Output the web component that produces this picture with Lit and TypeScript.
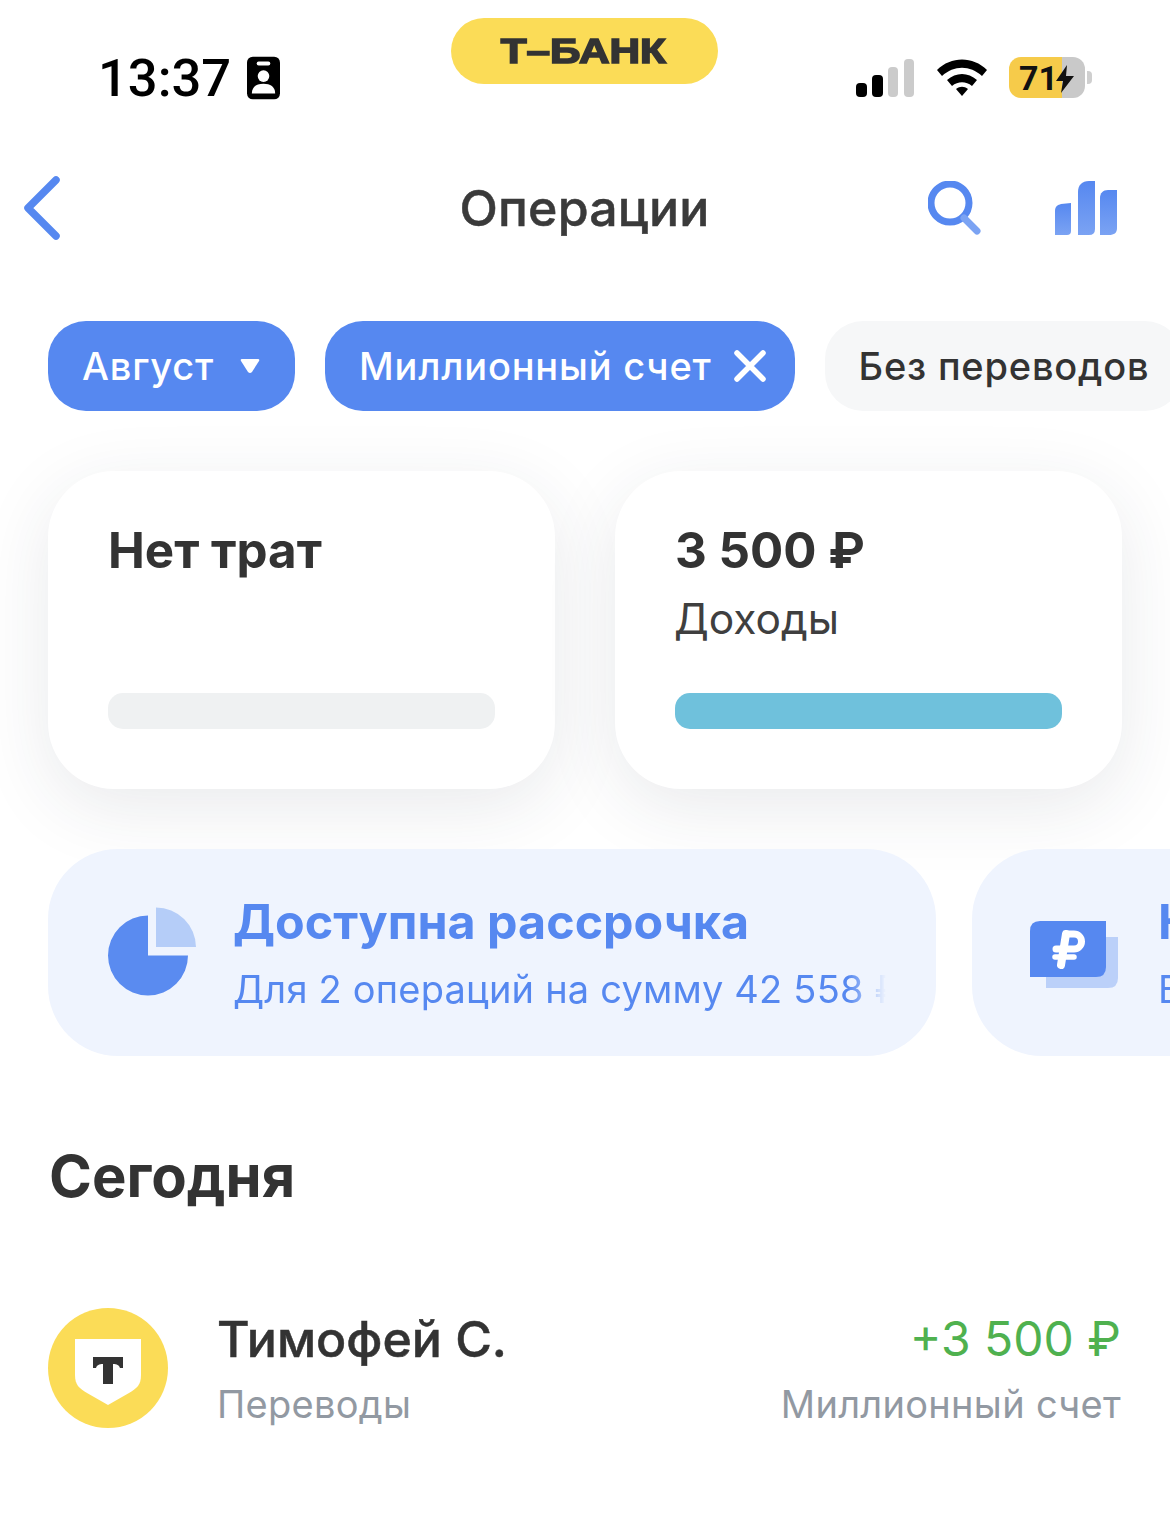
import { LitElement, html, css } from 'lit';
import { customElement } from 'lit/decorators.js';

@customElement('app-root')
export class AppRoot extends LitElement {
	static styles = css`
		:host {
			display: block;
			width: 1170px;
			height: 1524px;
			overflow: hidden;
			background: #fff;
			font-family: Inter, Roboto, "Liberation Sans", sans-serif;
			color: #333333;
			position: relative;
		}

		.status {
			height: 140px;
			box-sizing: border-box;
			padding: 50px 85px 0 98px;
			display: flex;
			align-items: flex-start;
			justify-content: space-between;
		}
		.status-left { display: flex; align-items: center; gap: 16px; }
		.time { font-family: Roboto, sans-serif; font-size: 52.5px; line-height: 56px; color: #000; font-weight: 500; }
		.status-right { display: flex; align-items: center; padding-top: 7px; }
		.status-right svg { display: block; }
		.wifi { margin-left: 23px; }
		.battery {
			margin-left: 22px;
			width: 76px;
			height: 41px;
			border-radius: 12px;
			background: linear-gradient(90deg, #f6cb4a 0 53px, #c9c9c9 53px);
			position: relative;
			display: flex;
			align-items: center;
			padding-left: 10px;
			box-sizing: border-box;
			font-family: Roboto, sans-serif;
			font-size: 34px;
			font-weight: 700;
			color: #111;
		}
		.battery .bolt { position: absolute; left: 46px; top: 8px; }
		.battery::after {
			content: '';
			position: absolute;
			right: -7px;
			top: 14px;
			width: 5px;
			height: 13px;
			border-radius: 0 4px 4px 0;
			background: #cfcfcf;
		}
		.brand {
			position: absolute;
			left: 451px;
			top: 18px;
			width: 267px;
			height: 66px;
			box-sizing: border-box;
			padding-right: 3px;
			border-radius: 33px;
			background: #fbdc57;
			display: flex;
			align-items: center;
			justify-content: center;
			font-family: "Liberation Sans", sans-serif;
			font-weight: 700;
			font-size: 35px;
			color: #333333;
			-webkit-text-stroke: 1.6px #333333;
		}
		.brand span { display: inline-block; transform: scaleX(1.21); }

		.nav {
			height: 135px;
			display: grid;
			grid-template-columns: 1fr auto 1fr;
			align-items: center;
			padding: 0 53px 0 23px;
			margin-bottom: 46px;
		}
		.nav h1 {
			margin: 0;
			font-size: 50px;
			line-height: 56px;
			font-weight: 500;
			letter-spacing: 0.2px;
			color: #3a3a3a;
			padding-left: 29px;
			-webkit-text-stroke: 0.5px #3a3a3a;
		}
		.nav-actions { display: flex; justify-content: flex-end; align-items: center; gap: 74px; }
		.nav svg { display: block; }

		.chips { display: flex; gap: 30px; padding-left: 48px; margin-bottom: 60px; white-space: nowrap; }
		.chip {
			height: 90px;
			border-radius: 38px;
			display: flex;
			align-items: center;
			padding: 0 34px;
			box-sizing: border-box;
			font-size: 38px;
			letter-spacing: 0.8px;
			flex: none;
			font-weight: 500;
		}
		.chip.on { background: #5688f0; color: #fff; }
		.chip.off { background: #f6f7f8; color: #333333; }
		.chip svg { display: block; }
		.chip .caret { margin-left: 26px; margin-right: 1px; }
		.chip .close { margin-left: 22px; margin-right: -5px; }

		.cards { display: flex; gap: 60px; padding-left: 48px; margin-bottom: 60px; }
		.card {
			width: 507px;
			height: 318px;
			box-sizing: border-box;
			border-radius: 66px;
			background: #fff;
			box-shadow: 0 18px 72px rgba(40, 50, 70, 0.10);
			padding: 48px 60px 60px;
			display: flex;
			flex-direction: column;
		}
		.card .value { font-size: 49.3px; line-height: 62px; font-weight: 700; color: #333333; }
		.card .label { font-size: 42.500px; line-height: 52px; margin: 12px 0 0 -1px; color: #3f3f3f; }
		.bar { margin-top: auto; height: 36px; border-radius: 15px; background: #eff1f2; }
		.bar.fill { background: #6fc1dc; }

		.promos { display: flex; gap: 36px; padding-left: 48px; margin-bottom: 87px; }
		.promo {
			height: 207px;
			box-sizing: border-box;
			border-radius: 70px;
			background: #eff4fe;
			display: flex;
			align-items: center;
			flex: none;
			overflow: hidden;
			color: #5688f0;
		}
		.promo.first { width: 888px; padding-left: 60px; }
		.promo.second { width: 500px; padding-left: 58px; }
		.promo svg { display: block; flex: none; }
		.pie { margin-top: -3px; }
		.wallet { margin-top: 3px; }
		.promo-text { margin-left: 36px; min-width: 0; flex: 1; padding-top: 6px; }
		.promo.second .promo-text { margin-left: 40px; }
		.promo-title { font-size: 48.4px; line-height: 60px; font-weight: 700; white-space: nowrap; margin-top: -6px; }
		.promo-sub {
			font-size: 38px;
			letter-spacing: 0.2px;
			line-height: 48px;
			margin-top: 13px;
			white-space: nowrap;
			overflow: hidden;
			margin-right: 48px;
			-webkit-mask-image: linear-gradient(90deg, #000 calc(100% - 40px), transparent calc(100% - 2px));
			mask-image: linear-gradient(90deg, #000 calc(100% - 40px), transparent calc(100% - 2px));
		}

		.day { margin: 0 0 98px 49px; font-size: 58px; line-height: 66px; font-weight: 700; color: #333333; }

		.op { display: flex; align-items: center; padding: 0 49px 0 48px; }
		.op svg { display: block; flex: none; }
		.op-main { margin-left: 49px; flex: 1; padding-top: 1px; }
		.op-side { text-align: right; padding-top: 1px; }
		.op-title { font-size: 50px; line-height: 62px; font-weight: 500; color: #333333; -webkit-text-stroke: 0.5px #333333; }
		.op-sub { font-size: 38px; letter-spacing: 0.3px; line-height: 48px; margin-top: 10px; color: #9299a2; }
		.op-amount { font-size: 48px; line-height: 62px; color: #4fb14f; }
	`;

	render() {
		return html`
			<div class="status">
				<div class="status-left">
					<span class="time">13:37</span>
					<svg width="33" height="44" viewBox="0 0 34 44">
						<rect width="34" height="44" rx="6" fill="#000" />
						<rect x="10" y="5" width="14" height="4" rx="2" fill="#fff" />
						<circle cx="17" cy="20" r="6" fill="#fff" />
						<path d="M5 38c0-7 5-10 12-10s12 3 12 10z" fill="#fff" />
					</svg>
				</div>
				<div class="status-right">
					<svg width="58" height="38" viewBox="0 0 58 38">
						<rect x="0" y="24" width="11" height="14" rx="4" fill="#000" />
						<rect x="16" y="16" width="11" height="22" rx="4" fill="#000" />
						<rect x="32" y="8" width="10" height="30" rx="4" fill="#cbcbcb" />
						<rect x="48" y="0" width="10" height="38" rx="4" fill="#cbcbcb" />
					</svg>
					<svg class="wifi" width="50" height="38" viewBox="0 0 50 38">
						<path d="M0 11C14-3 36-3 50 11l-5 6C33 6 17 6 5 17z" fill="#000" />
						<path d="M10 21c9-8 21-8 30 0l-5 6c-6-5-14-5-20 0z" fill="#000" />
						<path d="M19 30c4-3 8-3 12 0l-6 7z" fill="#000" />
					</svg>
					<div class="battery">
						71
						<svg class="bolt" width="20" height="28" viewBox="0 0 20 28">
							<path d="M12 0 1 16h7l-2 12L19 11h-8z" fill="#111" />
						</svg>
					</div>
				</div>
			</div>
			<div class="brand"><span>Т–БАНК</span></div>

			<div class="nav">
				<svg width="38" height="64" viewBox="0 0 38 64">
					<path d="M33 4 5 32l28 28" fill="none" stroke="#5688f0" stroke-width="7.5" stroke-linecap="round" stroke-linejoin="round" />
				</svg>
				<h1>Операции</h1>
				<div class="nav-actions">
					<svg width="53" height="54" viewBox="0 0 53 54">
						<circle cx="22" cy="22" r="19" fill="none" stroke="#5688f0" stroke-width="7" />
						<path d="M36 37 49 50" fill="none" stroke="#7ba3f3" stroke-width="7" stroke-linecap="round" />
					</svg>
					<svg width="62" height="54" viewBox="0 0 62 54">
						<defs>
							<linearGradient id="bars" x1="0" y1="0" x2="0" y2="1">
								<stop offset="0" stop-color="#5688f0" />
								<stop offset="1" stop-color="#7ba3f3" />
							</linearGradient>
						</defs>
						<path d="M0 54V30c0-5 3-6 6-7l10-1v28q0 4-4 4z" fill="url(#bars)" />
						<path d="M23 54V11C23 4 27 0 34 0h6v48q0 6-6 6z" fill="url(#bars)" />
						<path d="M45 54V17c0-5 3-8 8-8h9v38c0 5-3 7-8 7z" fill="url(#bars)" />
					</svg>
				</div>
			</div>

			<div class="chips">
				<div class="chip on">
					Август
					<svg class="caret" width="20" height="16" viewBox="0 0 20 16">
						<path d="M2 1h16q2 0 1 2l-7 11q-2 2-4 0L1 3Q0 1 2 1z" fill="#fff" />
					</svg>
				</div>
				<div class="chip on">
					Миллионный счет
					<svg class="close" width="32" height="32" viewBox="0 0 32 32">
						<path d="M3 3l26 26M29 3 3 29" fill="none" stroke="#fff" stroke-width="5.500" stroke-linecap="round" />
					</svg>
				</div>
				<div class="chip off">Без переводов</div>
			</div>

			<div class="cards">
				<div class="card">
					<div class="value">Нет трат</div>
					<div class="bar"></div>
				</div>
				<div class="card">
					<div class="value">3 500 ₽</div>
					<div class="label">Доходы</div>
					<div class="bar fill"></div>
				</div>
			</div>

			<div class="promos">
				<div class="promo first">
					<svg class="pie" width="89" height="89" viewBox="0 0 89 89">
						<path d="M40 8.500A40 40 0 1 0 80 48.500H40z" fill="#5a8bf0" />
						<path d="M48 0.500A40 40 0 0 1 88 40H48z" fill="#b5cdf8" />
					</svg>
					<div class="promo-text">
						<div class="promo-title">Доступна рассрочка</div>
						<div class="promo-sub">Для 2 операций на сумму 42 558 ₽</div>
					</div>
				</div>
				<div class="promo second">
					<svg class="wallet" width="88" height="68" viewBox="0 0 88 68">
						<path d="M16 17h72v41q0 10-10 10H16z" fill="#bbd0f9" />
						<path d="M10 1h66v46q0 10-10 10H0V11Q0 1 10 1z" fill="#5688f0" />
						<path d="M36 14 31 45" fill="none" stroke="#fff" stroke-width="8" stroke-linecap="round" />
						<path d="M37 14h7a7.500 7.500 0 0 1 0 15H26" fill="none" stroke="#fff" stroke-width="7" stroke-linecap="round" />
						<path d="M25 37H44" fill="none" stroke="#fff" stroke-width="5.500" stroke-linecap="round" />
					</svg>
					<div class="promo-text">
						<div class="promo-title">Кешбэк</div>
						<div class="promo-sub">В этом месяце</div>
					</div>
				</div>
			</div>

			<h2 class="day">Сегодня</h2>

			<div class="op">
				<svg width="120" height="120" viewBox="0 0 120 120">
					<circle cx="60" cy="60" r="60" fill="#fbdc57" />
					<path d="M27 31h66v36c0 10-4 13-12 18l-21 12-21-12c-8-5-12-8-12-18z" fill="#fff" />
					<path d="M45 49h30v11h-3c-1-3-3-4-7-4v20h-10V56c-4 0-6 1-7 4h-3z" fill="#333" />
				</svg>
				<div class="op-main">
					<div class="op-title">Тимофей С.</div>
					<div class="op-sub">Переводы</div>
				</div>
				<div class="op-side">
					<div class="op-amount">+3 500 ₽</div>
					<div class="op-sub">Миллионный счет</div>
				</div>
			</div>
		`;
	}
}
